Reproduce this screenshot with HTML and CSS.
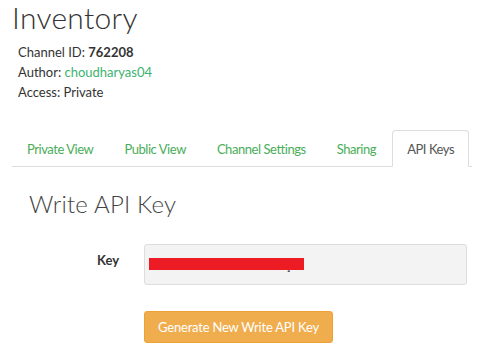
FILE: index.html
```html
<!DOCTYPE html>
<html>
<head>
<meta charset="utf-8">
<link rel="stylesheet" href="styles.css">
</head>
<body>
<div class="page">
  <h1 class="title">Inventory</h1>
  <div class="info">
    <div>Channel ID: <b>762208</b></div>
    <div>Author: <span class="link">choudharyas04</span></div>
    <div>Access: Private</div>
  </div>
  <ul class="tabs">
    <li class="tab">Private View</li>
    <li class="tab">Public View</li>
    <li class="tab">Channel Settings</li>
    <li class="tab">Sharing</li>
    <li class="tab active">API Keys</li>
  </ul>
  <div class="content">
    <h2 class="subtitle">Write API Key</h2>
    <div class="form-row">
      <label class="label">Key</label>
      <div class="input"><span class="redact"></span><span class="tail">ç</span></div>
    </div>
    <div class="btn-row">
      <button class="btn">Generate New Write API Key</button>
    </div>
  </div>
</div>
</body>
</html>
```

FILE: styles.css
```css
* { box-sizing: border-box; }
body {
  margin: 0;
  font-family: Lato, "Open Sans", sans-serif;
  font-size: 13px;
  color: #333;
  background: #fff;
}
.page {
  padding: 0 25px 0 12px;
}
.title {
  margin: 0;
  padding-top: 1px;
  font-size: 30px;
  font-weight: 300;
  line-height: 32px;
  color: #333;
  letter-spacing: 0.3px;
}
.info {
  margin-top: 9px;
  padding-left: 6px;
  line-height: 20px;
}
.info b { font-weight: 700; }
.link { color: #3cb371; }
.tabs {
  list-style: none;
  margin: 28px 0 0 0;
  padding: 0;
  display: flex;
  border-bottom: 1px solid #ddd;
  height: 37px;
}
.tab {
  flex-shrink: 0;
  white-space: nowrap;
  padding: 0 14px;
  margin-right: 1px;
  line-height: 36px;
  letter-spacing: -0.45px;
  color: #49ad58;
  border: 1px solid transparent;
  border-radius: 4px 4px 0 0;
  height: 37px;
}
.tab.active {
  color: #555;
  border-color: #ddd;
  border-bottom-color: #fff;
  background: #fff;
}
.content {
  padding-left: 17px;
}
.subtitle {
  margin: 22px 0 0 0;
  font-size: 24px;
  font-weight: 300;
  line-height: 30px;
  color: #444;
  letter-spacing: 0.2px;
}
.form-row {
  display: flex;
  align-items: center;
  margin-top: 25px;
}
.label {
  width: 90px;
  text-align: right;
  font-weight: 700;
  position: relative;
  top: -5px;
}
.input {
  margin-left: 25px;
  width: 323px;
  height: 41px;
  background: #f3f3f3;
  border: 1px solid #ddd;
  border-radius: 3px;
  position: relative;
}
.redact {
  position: absolute;
  left: 4px;
  top: 13px;
  width: 155px;
  height: 12px;
  background: #ed1c24;
}
.tail {
  position: absolute;
  left: 140px;
  top: 12px;
  font-size: 13px;
  color: #333;
  clip-path: inset(13px 0 0 0);
}
.btn-row {
  margin-top: 26px;
  padding-left: 115px;
}
.btn {
  width: 189px;
  height: 32px;
  background: #f0ad4e;
  border: 1px solid #eea236;
  border-radius: 3px;
  color: #fff;
  font-family: Lato, sans-serif;
  font-size: 13px;
  font-weight: 400;
  letter-spacing: -0.2px;
  padding: 0;
}
```
